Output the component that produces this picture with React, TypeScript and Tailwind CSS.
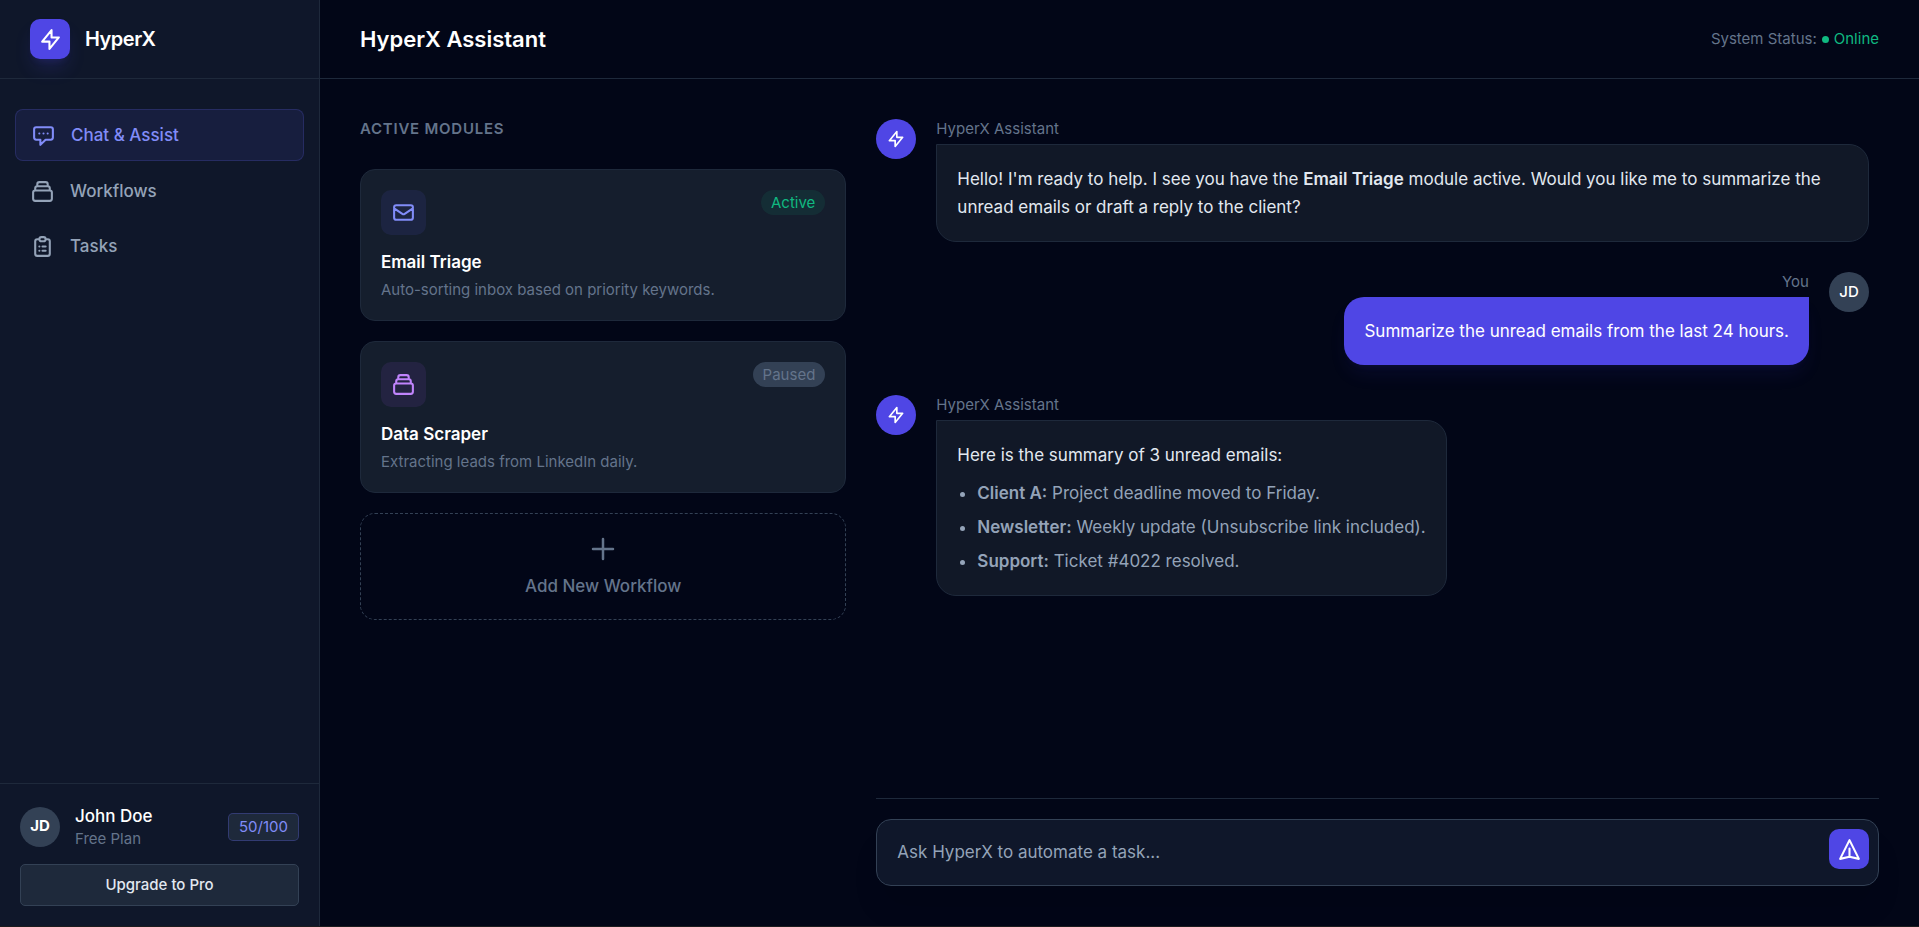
import type { ComponentType, ReactNode } from 'react';
import {
  HiOutlineClipboardList,
  HiOutlineCollection,
  HiOutlineLightningBolt,
  HiOutlineMail,
  HiOutlinePlus,
} from 'react-icons/hi';
import clsx from 'clsx';

type Icon = ComponentType<{ className?: string }>;

function ChatIcon({ className }: { className?: string }) {
  return (
    <svg className={className} fill="none" stroke="currentColor" viewBox="0 0 24 24" aria-hidden="true">
      <path
        strokeLinecap="round"
        strokeLinejoin="round"
        strokeWidth={2}
        d="M8 10h.01M12 10h.01M16 10h.01M9 16H5a2 2 0 01-2-2V6a2 2 0 012-2h14a2 2 0 012 2v8a2 2 0 01-2 2h-5l-5 5v-5z"
      />
    </svg>
  );
}

function SendIcon({ className }: { className?: string }) {
  return (
    <svg className={className} fill="none" stroke="currentColor" viewBox="0 0 24 24" aria-hidden="true">
      <path
        strokeLinecap="round"
        strokeLinejoin="round"
        strokeWidth={2}
        d="M12 19l9 2-9-18-9 18 9-2zm0 0v-8"
      />
    </svg>
  );
}

const navItems: { label: string; icon: Icon; active?: boolean }[] = [
  { label: 'Chat & Assist', icon: ChatIcon, active: true },
  { label: 'Workflows', icon: HiOutlineCollection },
  { label: 'Tasks', icon: HiOutlineClipboardList },
];

function Sidebar() {
  return (
    <aside className="flex w-[320px] shrink-0 flex-col border-r border-[#1e293b] bg-[#0f172a]">
      <div className="flex h-[79px] items-center gap-[15px] border-b border-[#1e293b] px-[30px]">
        <div className="flex size-10 items-center justify-center rounded-[10px] bg-[#4f46e5] text-white shadow-[0_12px_19px_-4px_rgba(79,70,229,0.2),0_5px_8px_-5px_rgba(79,70,229,0.2)]">
          <HiOutlineLightningBolt className="size-[25px]" />
        </div>
        <span className="text-[20px] font-semibold tracking-tight text-white">HyperX</span>
      </div>

      <nav className="flex flex-1 flex-col gap-[5px] px-[15px] pt-[30px]">
        {navItems.map(({ label, icon: ItemIcon, active }) => (
          <a
            key={label}
            href="#"
            className={clsx(
              'flex items-center gap-[15px] rounded-lg px-[15px] py-3 text-[17px] leading-[26px] font-medium',
              active ? 'border border-[#6366f1]/20 bg-[#6366f1]/10 text-[#818cf8]' : 'text-[#94a3b8]'
            )}
          >
            <ItemIcon className="size-[25px]" />
            {label}
          </a>
        ))}
      </nav>

      <div className="border-t border-[#1e293b] p-5">
        <div className="mb-[15px] flex items-center gap-[15px]">
          <Avatar className="bg-[#334155] font-bold">JD</Avatar>
          <div className="flex-1">
            <p className="text-[17px] leading-[25px] font-medium text-white">John Doe</p>
            <p className="text-[15px] leading-5 text-[#64748b]">Free Plan</p>
          </div>
          <span className="rounded-[5px] border border-[#6366f1]/30 bg-[#1e293b] px-[10px] py-[3px] text-[15px] leading-5 text-[#818cf8]">
            50/100
          </span>
        </div>
        <button
          type="button"
          className="w-full rounded-[5px] border border-[#334155] bg-[#1e293b] py-[10px] text-[15px] leading-5 font-medium text-[#e2e8f0]"
        >
          Upgrade to Pro
        </button>
      </div>
    </aside>
  );
}

function Avatar({ className, children }: { className?: string; children: ReactNode }) {
  return (
    <div
      className={clsx(
        'flex size-10 shrink-0 items-center justify-center rounded-full text-[15px] text-white',
        className
      )}
    >
      {children}
    </div>
  );
}

interface ModuleCardProps {
  icon: Icon;
  iconClass: string;
  title: string;
  description: string;
  status: string;
  statusClass: string;
}

function ModuleCard({ icon: CardIcon, iconClass, title, description, status, statusClass }: ModuleCardProps) {
  return (
    <article className="rounded-[15px] border border-[#1e293b] bg-[#151e2d] p-5">
      <div className="mb-[15px] flex items-start justify-between">
        <div className={clsx('rounded-[10px] p-[10px]', iconClass)}>
          <CardIcon className="size-[25px]" />
        </div>
        <span className={clsx('rounded-full px-[10px] text-[15px] leading-[25px]', statusClass)}>{status}</span>
      </div>
      <h3 className="mb-[5px] text-[17px] leading-[25px] font-semibold text-white">{title}</h3>
      <p className="text-[15px] leading-5 text-[#64748b]">{description}</p>
    </article>
  );
}

function Modules() {
  return (
    <section className="col-span-4 flex flex-col gap-5">
      <h2 className="mb-[10px] text-[15px] leading-5 font-semibold tracking-wider text-[#64748b] uppercase">
        Active Modules
      </h2>
      <ModuleCard
        icon={HiOutlineMail}
        iconClass="bg-[#6366f1]/10 text-[#818cf8]"
        title="Email Triage"
        description="Auto-sorting inbox based on priority keywords."
        status="Active"
        statusClass="bg-[#10b981]/10 text-[#10b981]"
      />
      <ModuleCard
        icon={HiOutlineCollection}
        iconClass="bg-[#a855f7]/10 text-[#c084fc]"
        title="Data Scraper"
        description="Extracting leads from LinkedIn daily."
        status="Paused"
        statusClass="bg-[#334155] text-[#64748b]"
      />
      <button
        type="button"
        className="flex flex-col items-center gap-[10px] rounded-[15px] border border-dashed border-[#334155] p-5 text-[17px] leading-[25px] font-medium text-[#64748b]"
      >
        <HiOutlinePlus className="size-[30px]" />
        Add New Workflow
      </button>
    </section>
  );
}

function AssistantMessage({ children }: { children: ReactNode }) {
  return (
    <div className="flex gap-5">
      <Avatar className="bg-[#4f46e5]">
        <HiOutlineLightningBolt className="size-5" />
      </Avatar>
      <div>
        <p className="mb-[5px] text-[15px] leading-5 text-[#64748b]">HyperX Assistant</p>
        <div className="rounded-[20px] rounded-tl-none border border-[#1e293b] bg-[#111827] p-5 text-[17px] leading-7 text-[#e2e8f0]">
          {children}
        </div>
      </div>
    </div>
  );
}

function UserMessage({ children }: { children: ReactNode }) {
  return (
    <div className="flex flex-row-reverse gap-5">
      <Avatar className="bg-[#334155] font-medium">JD</Avatar>
      <div>
        <p className="mb-[5px] text-right text-[15px] leading-5 text-[#64748b]">You</p>
        <div className="rounded-[20px] rounded-tr-none bg-[#4f46e5] p-5 text-[17px] leading-7 text-white shadow-[0_12px_19px_-4px_rgba(79,70,229,0.1),0_5px_8px_-5px_rgba(79,70,229,0.1)]">
          {children}
        </div>
      </div>
    </div>
  );
}

const summary = [
  { from: 'Client A:', text: 'Project deadline moved to Friday.' },
  { from: 'Newsletter:', text: 'Weekly update (Unsubscribe link included).' },
  { from: 'Support:', text: 'Ticket #4022 resolved.' },
];

function Chat() {
  return (
    <section className="col-span-8 flex min-h-0 flex-col">
      <div className="flex flex-1 flex-col gap-[30px] pr-[10px]">
        <AssistantMessage>
          Hello! I'm ready to help. I see you have the <strong className="font-semibold">Email Triage</strong> module
          active. Would you like me to summarize the unread emails or draft a reply to the client?
        </AssistantMessage>
        <UserMessage>Summarize the unread emails from the last 24 hours.</UserMessage>
        <AssistantMessage>
          <p>Here is the summary of 3 unread emails:</p>
          <ul className="mt-[10px] flex list-disc flex-col gap-[6px] pl-5 text-[#94a3b8]">
            {summary.map((item) => (
              <li key={item.from}>
                <strong className="font-semibold">{item.from}</strong> {item.text}
              </li>
            ))}
          </ul>
        </AssistantMessage>
      </div>

      <form className="border-t border-[#1e293b] pt-5" onSubmit={(e) => e.preventDefault()}>
        <div className="relative">
          <input
            type="text"
            aria-label="Message"
            placeholder="Ask HyperX to automate a task..."
            className="block w-full rounded-[15px] border border-[#334155] bg-[#0f172a] py-5 pr-[70px] pl-5 text-[17px] leading-[25px] text-white shadow-[0_25px_31px_-6px_rgba(0,0,0,0.1)] outline-none placeholder:text-[#94a3b8]"
          />
          <button
            type="submit"
            aria-label="Send"
            className="absolute top-[10px] right-[10px] flex size-10 items-center justify-center rounded-[10px] bg-[#4f46e5] text-white"
          >
            <SendIcon className="size-[25px]" />
          </button>
        </div>
      </form>
    </section>
  );
}

export default function App() {
  return (
    <div className="flex min-h-screen border-b border-[#1c1c1e] bg-[#020617] font-['Inter',sans-serif]">
      <Sidebar />
      <div className="flex min-w-0 flex-1 flex-col">
        <header className="flex h-[79px] items-center justify-between border-b border-[#1e293b] px-10">
          <h1 className="text-[22px] font-semibold text-white">HyperX Assistant</h1>
          <p className="flex items-center text-[15px] leading-5 text-[#64748b]">
            System Status:
            <span className="ml-[5px] flex items-center gap-[5px] text-[#10b981]">
              <span className="size-[7px] rounded-full bg-[#10b981]" />
              Online
            </span>
          </p>
        </header>
        <main className="grid flex-1 grid-cols-12 gap-[30px] p-10">
          <Modules />
          <Chat />
        </main>
      </div>
    </div>
  );
}
